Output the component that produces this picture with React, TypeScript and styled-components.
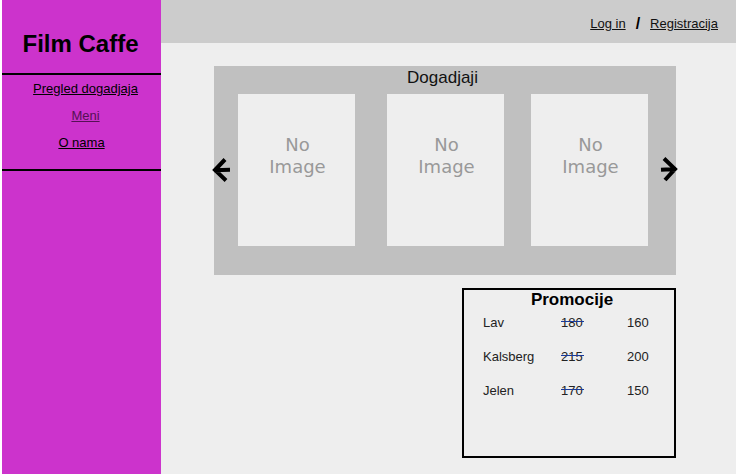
import React from "react";
import styled, { createGlobalStyle } from "styled-components";

const GlobalStyle = createGlobalStyle`
  *, *::before, *::after { box-sizing: border-box; }
  body {
    margin: 0;
    background: #ffffff;
    color: #000000;
    font-family: "Liberation Sans", Arial, sans-serif;
    font-size: 13px;
    line-height: 16px;
  }
`;

const Shell = styled.div`
  display: grid;
  grid-template-columns: 159px minmax(0, 1fr);
  min-height: 100vh;
  padding: 0 0 1px 2px;
`;

const Sidebar = styled.aside`
  background: #cc33cc;
`;

const Brand = styled.h1`
  margin: 0;
  padding: 30px 2px 15px 0;
  font-size: 24px;
  line-height: 28px;
  text-align: center;
  white-space: nowrap;
`;

const Nav = styled.nav`
  display: flex;
  flex-direction: column;
  align-items: center;
  gap: 11px;
  height: 98px;
  padding-top: 6px;
  border-top: 2px solid #000000;
  border-bottom: 2px solid #000000;
`;

const NavLink = styled.a<{ $indent?: boolean; $visited?: boolean }>`
  padding-left: ${({ $indent }) => ($indent ? 8 : 0)}px;
  color: ${({ $visited }) => ($visited ? "#551155" : "#000000")};
  text-decoration: none;

  span {
    text-decoration: underline;
  }
`;

const Page = styled.div`
  background: #eeeeee;
`;

const TopBar = styled.header`
  display: flex;
  justify-content: flex-end;
  align-items: center;
  gap: 10px;
  height: 43px;
  padding: 4px 18px 0 0;
  background: #cccccc;
`;

const AccountLink = styled.a`
  color: #111111;
`;

const Divider = styled.span`
  font-size: 16px;
  font-weight: bold;
`;

const Content = styled.main`
  display: flex;
  flex-direction: column;
  gap: 13px;
  padding: 23px 60px 16px 53px;
`;

const Carousel = styled.section`
  position: relative;
  padding-bottom: 29px;
  background: #c0c0c0;
`;

const CarouselTitle = styled.h2`
  margin: 0;
  padding: 2px 5px 6px 0;
  color: #111111;
  font-size: 17px;
  font-weight: normal;
  line-height: 20px;
  text-align: center;
`;

const Slides = styled.div`
  display: grid;
  grid-template-columns: 24fr 117fr 32fr 117fr 27fr 117fr 28fr;
`;

const Slide = styled.div<{ $column: number }>`
  grid-column: ${({ $column }) => $column};
  grid-row: 1;
  height: 152px;
  padding: 40px 0 0 2px;
  background: #eeeeee;
  color: #999999;
  font-family: "DejaVu Sans", sans-serif;
  font-size: 18px;
  line-height: 22px;
  text-align: center;
`;

const ArrowButton = styled.button<{ $side: "left" | "right" }>`
  position: absolute;
  top: 91px;
  ${({ $side }) => $side}: -2px;
  display: flex;
  padding: 0;
  border: 0;
  background: none;
  cursor: pointer;
`;

const Promotions = styled.section`
  align-self: flex-end;
  width: 214px;
  height: 170px;
  border: 2px solid #000000;
`;

const PromotionsTitle = styled.h2`
  margin: 0;
  padding: 1px 0 0 6px;
  font-size: 17px;
  line-height: 18px;
  text-align: center;
`;

const PriceTable = styled.table`
  width: 100%;
  margin-top: 6px;
  border-collapse: collapse;
  color: #222222;
  table-layout: fixed;

  th, td {
    height: 34px;
    padding: 0;
    font-weight: normal;
    text-align: left;
    vertical-align: top;
  }

  th {
    width: 97px;
    padding-left: 19px;
  }

  td:last-child {
    width: 47px;
  }
`;

const OldPrice = styled.s`
  position: relative;
  text-decoration: none;

  &::after {
    content: "";
    position: absolute;
    top: 6px;
    left: 0;
    width: 23px;
    height: 1px;
    background: #1a3a9a;
  }
`;

const slideColumns = [2, 4, 6];

const promotions = [
  { name: "Lav", before: 180, now: 160 },
  { name: "Kalsberg", before: 215, now: 200 },
  { name: "Jelen", before: 170, now: 150 },
];

export default function App() {
  return (
    <>
      <GlobalStyle />
      <Shell>
        <Sidebar>
          <Brand>Film Caffe</Brand>
          <Nav>
            <NavLink href="#events" $indent><span>Pregled dogadjaja</span></NavLink>
            <NavLink href="#menu" $indent $visited><span>Meni</span></NavLink>
            <NavLink href="#about"><span>O nama</span></NavLink>
          </Nav>
        </Sidebar>
        <Page>
          <TopBar>
            <AccountLink href="#login">Log in</AccountLink>
            <Divider>/</Divider>
            <AccountLink href="#register">Registracija</AccountLink>
          </TopBar>
          <Content>
            <Carousel>
              <CarouselTitle>Dogadjaji</CarouselTitle>
              <Slides>
                {slideColumns.map((column) => (
                  <Slide key={column} $column={column}>No<br />Image</Slide>
                ))}
              </Slides>
              <ArrowButton $side="left" aria-label="Prethodni">
                <svg width="18" height="26" viewBox="0 0 18 26" fill="none" stroke="#000" strokeWidth="4">
                  <path d="M13 2.5 L3 13 L14 23.5 M2 13.2 L18 12.8" />
                </svg>
              </ArrowButton>
              <ArrowButton $side="right" aria-label="Sledeći">
                <svg width="18" height="26" viewBox="0 0 18 26" fill="none" stroke="#000" strokeWidth="4">
                  <path d="M4 1.5 L15 12 L5 23 M1 12.8 L16 12" />
                </svg>
              </ArrowButton>
            </Carousel>
            <Promotions>
              <PromotionsTitle>Promocije</PromotionsTitle>
              <PriceTable>
                <tbody>
                  {promotions.map(({ name, before, now }) => (
                    <tr key={name}>
                      <th scope="row">{name}</th>
                      <td><OldPrice>{before}</OldPrice></td>
                      <td>{now}</td>
                    </tr>
                  ))}
                </tbody>
              </PriceTable>
            </Promotions>
          </Content>
        </Page>
      </Shell>
    </>
  );
}
